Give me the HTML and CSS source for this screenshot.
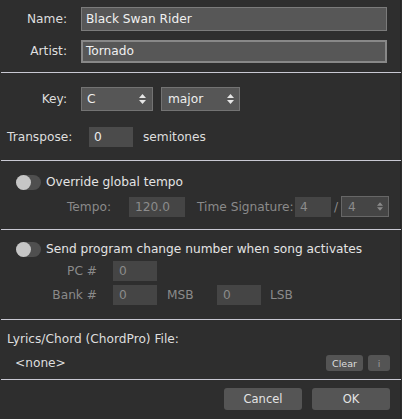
FILE: index.html
```html
<!DOCTYPE html>
<html>
<head>
<meta charset="utf-8">
<link rel="stylesheet" href="styles.css">
</head>
<body>
<div class="dialog">
  <section class="sec sec-meta">
    <div class="field-row">
      <span class="lbl">Name:</span>
      <div class="text-input">Black Swan Rider</div>
    </div>
    <div class="field-row">
      <span class="lbl">Artist:</span>
      <div class="text-input focused">Tornado</div>
    </div>
  </section>
  <div class="sep"></div>
  <section class="sec sec-key">
    <div class="key-row">
      <span class="lbl">Key:</span>
      <div class="select key-select"><span>C</span>
        <svg class="arrows" width="7" height="10" viewBox="0 0 7 10"><path d="M0 4 L3.5 0 L7 4 Z M0 6 L3.5 10 L7 6 Z"/></svg>
      </div>
      <div class="select mode-select"><span>major</span>
        <svg class="arrows" width="7" height="10" viewBox="0 0 7 10"><path d="M0 4 L3.5 0 L7 4 Z M0 6 L3.5 10 L7 6 Z"/></svg>
      </div>
    </div>
    <div class="transpose-row">
      <span class="transpose-lbl">Transpose:</span>
      <div class="num-input">0</div>
      <span class="unit">semitones</span>
    </div>
  </section>
  <div class="sep"></div>
  <section class="sec sec-tempo">
    <div class="toggle-row">
      <span class="toggle"><span class="knob"></span></span>
      <span class="toggle-text">Override global tempo</span>
    </div>
    <div class="tempo-row dim">
      <span class="tempo-lbl">Tempo:</span>
      <div class="num-input tempo-input">120.0</div>
      <span class="ts-lbl">Time Signature:</span>
      <div class="num-input ts-input">4</div>
      <span class="slash">/</span>
      <div class="select ts-select"><span>4</span>
        <svg class="arrows" width="6" height="9" viewBox="0 0 7 10"><path d="M0 4 L3.5 0 L7 4 Z M0 6 L3.5 10 L7 6 Z"/></svg>
      </div>
    </div>
  </section>
  <div class="sep"></div>
  <section class="sec sec-pc">
    <div class="toggle-row">
      <span class="toggle"><span class="knob"></span></span>
      <span class="toggle-text">Send program change number when song activates</span>
    </div>
    <div class="pc-row dim">
      <span class="pc-lbl">PC #</span>
      <div class="num-input pc-input">0</div>
    </div>
    <div class="pc-row dim">
      <span class="pc-lbl">Bank #</span>
      <div class="num-input pc-input">0</div>
      <span class="msb-lbl">MSB</span>
      <div class="num-input pc-input lsb-input">0</div>
      <span class="lsb-lbl">LSB</span>
    </div>
  </section>
  <div class="sep"></div>
  <section class="sec sec-file">
    <div class="file-lbl">Lyrics/Chord (ChordPro) File:</div>
    <div class="file-row">
      <span class="file-name">&lt;none&gt;</span>
      <div class="small-btns">
        <button class="small-btn clear-btn">Clear</button>
        <button class="small-btn info-btn">i</button>
      </div>
    </div>
  </section>
  <div class="sep"></div>
  <section class="sec sec-actions">
    <button class="btn">Cancel</button>
    <button class="btn">OK</button>
  </section>
</div>
</body>
</html>
```

FILE: styles.css
```css
html, body {
  margin: 0;
  padding: 0;
  background: #2e2e2e;
}
body {
  font-family: "DejaVu Sans", "Liberation Sans", sans-serif;
  font-size: 12.2px;
  color: #dedede;
  width: 402px;
  height: 419px;
  overflow: hidden;
}
.dialog {
  width: 401px;
  height: 419px;
  border-right: 1px solid #262626;
  box-sizing: border-box;
  display: flex;
  flex-direction: column;
}
.sep {
  height: 1px;
  background: #c9c9d3;
  margin-left: 1px;
  margin-right: -1px;
}
.sec { box-sizing: border-box; }

/* Section 1 */
.sec-meta {
  padding: 7px 0 9px;
  display: flex;
  flex-direction: column;
  gap: 8px;
}
.field-row {
  display: flex;
  align-items: center;
  height: 24px;
}
.lbl {
  width: 67px;
  text-align: right;
  margin-right: 14px;
}
.text-input {
  box-sizing: border-box;
  width: 306px;
  height: 24px;
  line-height: 22px;
  background: #575757;
  border: 1px solid #7b7b7b;
  padding-left: 4px;
  color: #f0f0f0;
}
.text-input.focused {
  height: 23px;
  line-height: 19px;
  border: 2px solid #888888;
  padding-left: 3px;
}

/* Section 2 */
.sec-key {
  padding: 14px 0 13px;
}
.key-row {
  display: flex;
  align-items: center;
  height: 24px;
}
.select {
  box-sizing: border-box;
  height: 24px;
  background: #565656;
  border: 1px solid #737373;
  display: flex;
  align-items: center;
  justify-content: space-between;
  color: #eeeeee;
}
.select .arrows { fill: #e6e6e6; }
.key-select {
  width: 72px;
  padding: 0 6px 0 5px;
  margin-right: 8px;
}
.mode-select {
  width: 79px;
  padding: 0 5px 0 6px;
}
.transpose-row {
  margin-top: 16px;
  height: 20px;
  display: flex;
  align-items: center;
  padding-left: 7px;
}
.transpose-lbl { width: 82px; }
.num-input {
  box-sizing: border-box;
  height: 20px;
  line-height: 20px;
  background: #4b4b4b;
  padding-left: 5px;
  color: #eeeeee;
}
.transpose-row .num-input { width: 44px; }
.unit { margin-left: 10px; }

/* Section 3 */
.sec-tempo {
  padding: 13px 0 12px;
}
.toggle-row {
  height: 16px;
  display: flex;
  align-items: center;
  padding-left: 16px;
}
.toggle {
  position: relative;
  width: 25px;
  height: 15px;
  border-radius: 8px;
  background: #4f4f4f;
  margin-right: 5px;
  flex: none;
}
.knob {
  position: absolute;
  left: 0;
  top: 0;
  width: 15px;
  height: 15px;
  border-radius: 50%;
  background: #c6c6c6;
}
.toggle-text { color: #e4e4e4; }
.dim { color: #8a8a8a; }
.dim .num-input {
  background: #454545;
  color: #8c8c8c;
}
.tempo-row {
  margin-top: 6px;
  height: 21px;
  display: flex;
  align-items: center;
  padding-left: 67px;
}
.tempo-lbl { width: 62px; }
.tempo-input {
  width: 56px;
  padding-left: 6px;
}
.ts-lbl {
  margin-left: 12px;
  width: 98px;
}
.ts-input {
  width: 36px;
  padding-left: 5px;
}
.slash {
  width: 10px;
  text-align: center;
}
.ts-select {
  width: 48px;
  height: 21px;
  background: #454545;
  border-color: #676767;
  color: #8c8c8c;
  padding: 0 5px 0 6px;
}
.ts-select .arrows { fill: #8a8a8a; }

/* Section 4 */
.sec-pc {
  padding: 11px 0 14px;
}
.pc-row {
  margin-top: 4px;
  height: 20px;
  display: flex;
  align-items: center;
}
.pc-lbl {
  width: 97px;
  text-align: right;
  margin-right: 16px;
}
.pc-input {
  width: 44px;
  padding-left: 6px;
}
.msb-lbl {
  margin-left: 10px;
  width: 50px;
}
.lsb-lbl { margin-left: 9px; }

/* Section 5 */
.sec-file {
  padding: 11px 10px 8px 0;
}
.file-lbl {
  height: 16px;
  line-height: 16px;
  padding-left: 7px;
}
.file-row {
  margin-top: 8px;
  height: 16px;
  display: flex;
  align-items: center;
  justify-content: space-between;
}
.file-name { padding-left: 15px; }
.small-btns {
  display: flex;
  gap: 5px;
}
.small-btn {
  height: 16px;
  border: none;
  border-radius: 3px;
  background: #545454;
  color: #dedede;
  font-family: "DejaVu Sans", "Liberation Sans", sans-serif;
  font-size: 9.5px;
  padding: 0;
}
.clear-btn { width: 37px; }
.info-btn { width: 22px; color: #9a9a9a; }

/* Section 6 */
.sec-actions {
  padding: 8px 10px 0 0;
  display: flex;
  justify-content: flex-end;
  gap: 10px;
}
.btn {
  width: 78px;
  height: 22px;
  border: none;
  border-radius: 3px;
  background: #555555;
  color: #e4e4e4;
  font-family: "DejaVu Sans", "Liberation Sans", sans-serif;
  font-size: 11.5px;
  padding: 0;
}
```
